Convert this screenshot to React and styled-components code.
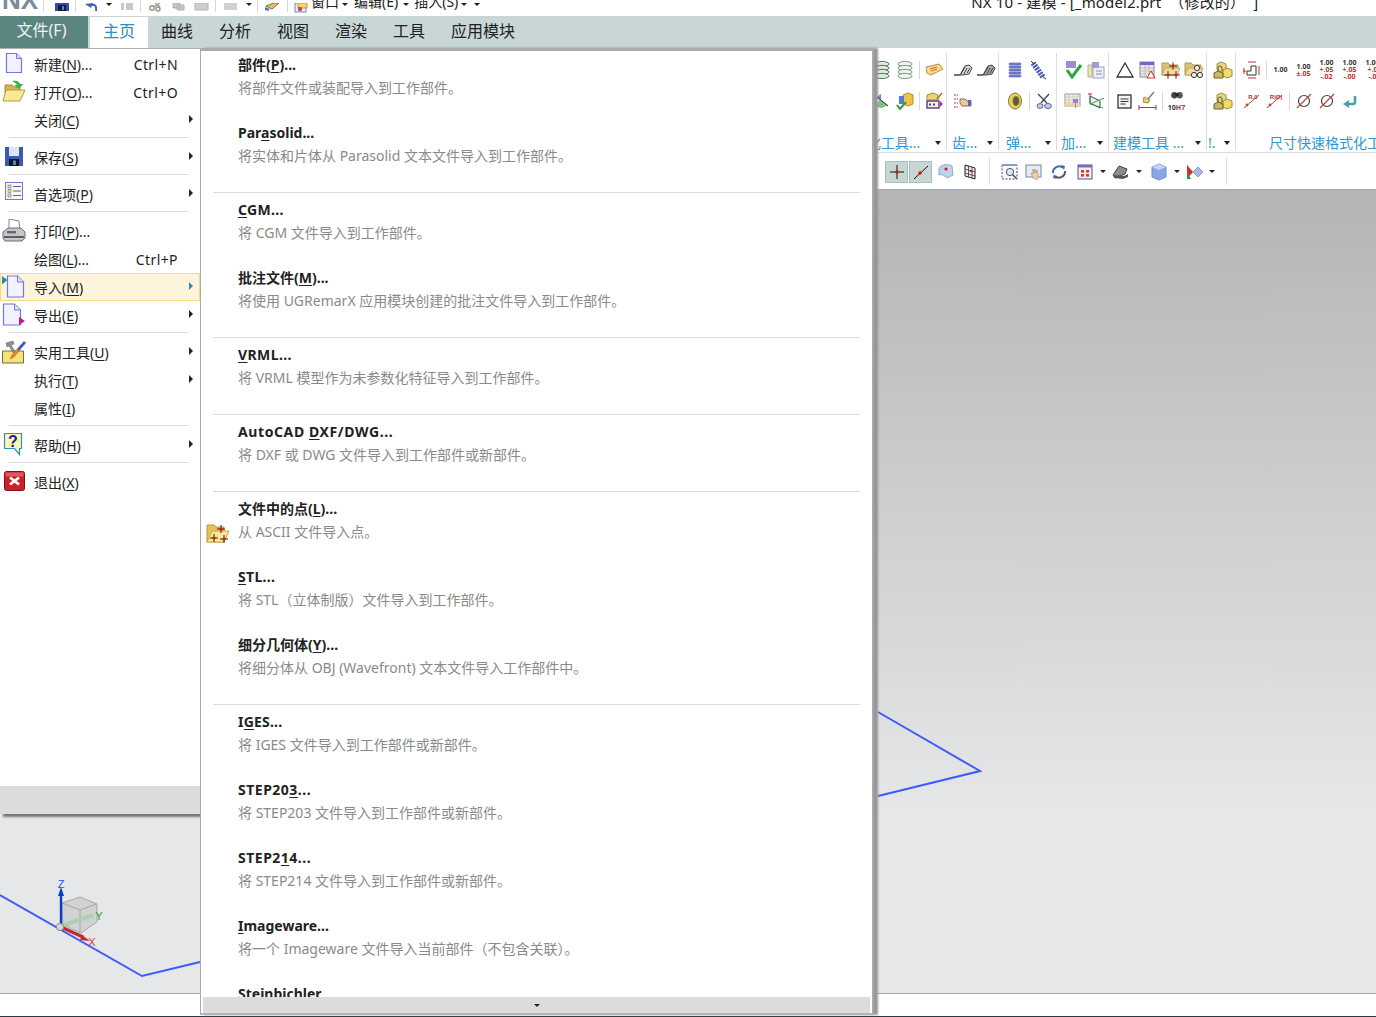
import styled, { createGlobalStyle } from "styled-components";

const GlobalStyle = createGlobalStyle`
  html, body {
    margin: 0;
    padding: 0;
    background: #fff;
  }
  body {
    font-family: "Noto Sans", "Noto Sans CJK SC", sans-serif;
    font-size: 14px;
    color: #222;
  }
  u {
    text-underline-offset: 2px;
  }
`;

const Page = styled.div`
  position: relative;
  width: 1376px;
  height: 1017px;
  overflow: hidden;
  display: flex;
  flex-direction: column;
`;

const TitleBar = styled.div`
  height: 8px;
  padding-bottom: 8px;
  display: flex;
  align-items: flex-end;
  background: #fff;
  overflow: hidden;
  flex: none;
`;

const Logo = styled.span`
  width: 36px;
  padding-left: 2px;
  box-sizing: border-box;
  font: bold 26px/20px "Liberation Sans", sans-serif;
  color: #7d8b9b;
  margin-bottom: -2px;
  flex: none;
`;

const TitleSep = styled.span`
  width: 1px;
  height: 13px;
  margin-left: ${(p) => p.$ml}px;
  margin-bottom: -4px;
  background: #d8d8d8;
  flex: none;
`;

const TitleIcon = styled.span`
  width: 16px;
  height: 10px;
  margin-left: ${(p) => p.$ml}px;
  flex: none;
`;

const TitleText = styled.span`
  margin-left: ${(p) => p.$ml}px;
  margin-bottom: -4px;
  font-size: ${(p) => p.$size || 14}px;
  letter-spacing: ${(p) => p.$track || 0}px;
  line-height: 20px;
  white-space: pre;
  flex: none;
`;

const Caret = styled.span`
  width: 0;
  height: 0;
  margin-left: ${(p) => p.$ml || 0}px;
  border-left: 3px solid transparent;
  border-right: 3px solid transparent;
  border-top: 3px solid #222;
  flex: none;
`;

const TitleCaret = styled(Caret)`
  margin-bottom: 2px;
`;

const TabBar = styled.div`
  height: 32px;
  display: flex;
  background: #c8d6d5;
  flex: none;
`;

const FileTab = styled.div`
  width: 88px;
  margin-right: 2px;
  background: #5b857f;
  color: #eef3f2;
  font-size: 16px;
  line-height: 29px;
  text-align: center;
  padding-right: 5px;
  box-sizing: border-box;
`;

const Tab = styled.div`
  padding: 0 13px;
  margin-top: ${(p) => (p.$active ? 1 : 0)}px;
  font-size: 16px;
  line-height: ${(p) => (p.$active ? 29 : 31)}px;
  background: ${(p) => (p.$active ? "#fff" : "transparent")};
  color: ${(p) => (p.$active ? "#2b8dc4" : "#222")};
`;

const Ribbon = styled.div`
  height: 105px;
  padding-left: 866px;
  display: flex;
  background: #fff;
  border-bottom: 1px solid #dedede;
  box-sizing: border-box;
  flex: none;
  overflow: hidden;
`;

const Group = styled.div`
  height: 96px;
  margin-top: 5px;
  padding: 1px 1px 0 4px;
  border-right: 1px solid #dcdcdc;
  flex: none;
`;

const LastGroup = styled(Group)`
  border-right: 0;
  padding-right: 0;
`;

const IconRow = styled.div`
  height: 31px;
  display: flex;
  align-items: center;
`;

const Cell = styled.div`
  width: 23px;
  height: 24px;
  display: flex;
  align-items: center;
  justify-content: center;
  flex: none;
`;

const RowDivider = styled.span`
  width: 1px;
  height: 18px;
  margin: 0 2.5px;
  background: #d8d8d8;
  flex: none;
`;

const GroupLabel = styled.div`
  height: 20px;
  margin-top: 17px;
  margin-left: ${(p) => p.$left}px;
  margin-right: 4px;
  display: flex;
  align-items: center;
  font-size: 14px;
  line-height: 20px;
  color: #2f97d3;
  white-space: nowrap;
`;

const LabelCaret = styled(Caret)`
  margin-left: auto;
  border-left-width: 3.5px;
  border-right-width: 3.5px;
  border-top-width: 4px;
`;

const Tol = styled.div`
  display: flex;
  flex-direction: column;
  align-items: center;
  font: 7px/7px "Noto Sans", sans-serif;
  color: #333;
  white-space: nowrap;
`;

const TolLine = styled.span`
  color: ${(p) => p.$color || "#333"};
  font-weight: ${(p) => (p.$bold ? 700 : 400)};
`;

const Toolbar = styled.div`
  height: 36px;
  padding: 1px 0 0 885px;
  display: flex;
  align-items: center;
  background: #fff;
  box-sizing: border-box;
  flex: none;
`;

const PressedButton = styled.div`
  width: 23px;
  height: 22px;
  margin-right: 1px;
  display: flex;
  align-items: center;
  justify-content: center;
  background: #c7d7d4;
  border: 1px solid #a9bdb9;
  box-sizing: border-box;
  flex: none;
`;

const ToolCell = styled.div`
  width: 24px;
  display: flex;
  justify-content: center;
  margin-left: ${(p) => p.$ml || 0}px;
  flex: none;
`;

const ToolSep = styled.span`
  width: 1px;
  height: 27px;
  margin-left: ${(p) => p.$ml}px;
  background: #dcdcdc;
  flex: none;
`;

const Viewport = styled.div`
  position: relative;
  flex: 1;
  border-top: 1px solid #a6a7a8;
  border-bottom: 1px solid #a9a9a9;
  background: linear-gradient(#b3b4b6 0%, #e6e7e9 78%);
`;

const Canvas = styled.svg`
  position: absolute;
  left: 0;
  top: 0;
`;

const StatusBar = styled.div`
  height: 22px;
  background: #fff;
  border-bottom: 1px solid #2b3a42;
  flex: none;
`;

const FileMenu = styled.div`
  position: absolute;
  left: 0;
  top: 48px;
  width: 200px;
  height: 766px;
  display: flex;
  flex-direction: column;
  padding-top: 1px;
  box-sizing: border-box;
  background: #fff;
  border-top: 1px solid #b0b0b0;
  box-shadow: 3px 3px 2px #777;
`;

const MenuRow = styled.div`
  height: 28px;
  display: flex;
  align-items: center;
  box-sizing: border-box;
  flex: none;
  background: ${(p) => (p.$active ? "#fdf4dc" : "transparent")};
  box-shadow: ${(p) => (p.$active ? "inset 0 0 0 1px #fad987" : "none")};
`;

const MenuIcon = styled.span`
  width: 34px;
  padding-left: 2px;
  box-sizing: border-box;
  display: flex;
  align-items: center;
  flex: none;
`;

const MenuLabel = styled.span`
  white-space: nowrap;
`;

const Shortcut = styled.span`
  margin-left: auto;
  margin-right: 22px;
  letter-spacing: 0.4px;
`;

const Arrow = styled.span`
  width: 0;
  height: 0;
  margin-left: auto;
  margin-right: 7px;
  margin-bottom: 2px;
  border-top: 4px solid transparent;
  border-bottom: 4px solid transparent;
  border-left: 4px solid ${(p) => (p.$active ? "#2b8dc4" : "#222")};
`;

const MenuSep = styled.div`
  height: 1px;
  margin: 3px 11px 5px 9px;
  background: #dcdcdc;
  flex: none;
`;

const MenuFoot = styled.div`
  margin-top: auto;
  height: 28px;
  background: #dcdcdc;
  flex: none;
`;

const SubMenu = styled.div`
  position: absolute;
  left: 200px;
  top: 48px;
  width: 674px;
  height: 967px;
  display: flex;
  flex-direction: column;
  box-sizing: border-box;
  background: #fff;
  border-top: 3px solid #ababab;
  border-left: 1px solid #ababab;
  border-right: 2px solid #a8a8a8;
  border-bottom: 2px solid #b4b4b4;
  box-shadow: 4px 0 2px #969696;
`;

const SubList = styled.div`
  flex: 1;
  overflow: hidden;
`;

const SubItem = styled.div`
  height: 68px;
  display: flex;
`;

const SubIcon = styled.div`
  width: 37px;
  padding: 25px 0 0 5px;
  box-sizing: border-box;
  flex: none;
`;

const SubText = styled.div`
  padding-top: 3px;
`;

const SubTitle = styled.div`
  font-weight: 700;
  font-size: 14px;
  line-height: 22px;
  letter-spacing: ${(p) => p.$track || 0}px;
  color: #222;
`;

const SubDesc = styled.div`
  margin-top: 1px;
  font-size: 14px;
  line-height: 22px;
  color: #8a8a8a;
`;

const SubSep = styled.div`
  height: 1px;
  margin: 5px 12px 3px 12px;
  background: #dcdcdc;
`;

const ScrollFoot = styled.div`
  height: 16px;
  margin: 0 2px;
  display: flex;
  align-items: center;
  justify-content: center;
  background: #dcdcdc;
  flex: none;
`;

const Ico = ({ size = 20, box = 20, children }) => (
  <svg width={size} height={size} viewBox={`0 0 ${box} ${box}`}>
    {children}
  </svg>
);

const TIco = ({ children }) => (
  <svg width="16" height="10" viewBox="0 0 16 10">
    {children}
  </svg>
);

const NewDoc = () => (
  <Ico size={24} box={24}>
    <path d="M4.5 1.5h10l5 5v14h-15z" fill="#f2f3ff" stroke="#7379dc" strokeWidth="1.2" />
    <path d="M14.5 1.5v5h5" fill="#dfe2fb" stroke="#7379dc" />
  </Ico>
);

const ImportDoc = () => (
  <Ico size={24} box={24}>
    <path d="M5.5 1h10l6 6v15h-16z" fill="#f2f3ff" stroke="#7379dc" strokeWidth="1.2" />
    <path d="M15.5 1v6h6" fill="#dfe2fb" stroke="#7379dc" />
    <path d="M0 1l5.5 4L0 9.5z" fill="#1f93a8" />
  </Ico>
);

const ExportDoc = () => (
  <Ico size={24} box={24}>
    <path d="M1.5 1h11l6 6v15h-17z" fill="#f2f3ff" stroke="#7379dc" strokeWidth="1.2" />
    <path d="M12.5 1v6h6" fill="#dfe2fb" stroke="#7379dc" />
    <path d="M17 14l6 4-6 4z" fill="#c0189c" />
  </Ico>
);

const FolderOpen = () => (
  <Ico size={24} box={24}>
    <path d="M3 5h7l2 2h6v6H3z" fill="#d8b34a" stroke="#a98d3a" />
    <path d="M1 21l3-11h19l-5 11z" fill="#fbe98f" stroke="#b69a42" />
    <path d="M10 1c4-1 7 0 8 3h3l-4 5-5-4h3c-1-2-3-3-5-4z" fill="#3fb14a" />
  </Ico>
);

const Floppy = () => (
  <Ico size={24} box={24}>
    <rect x="3" y="2" width="18" height="19" fill="#3a5bb4" />
    <rect x="7" y="2" width="10" height="9" fill="#dfe3f2" />
    <rect x="7" y="14" width="10" height="7" fill="#15151f" />
    <rect x="11" y="15.5" width="3" height="4.5" fill="#5d7fd0" />
  </Ico>
);

const Prefs = () => (
  <Ico size={24} box={24}>
    <rect x="3.5" y="0.5" width="17" height="17" fill="#f6f6ff" stroke="#7379dc" />
    {[3, 7.5, 12].map((y) => (
      <g key={y}>
        <rect x="6" y={y} width="3" height="3" fill="#f5e25a" stroke="#6a6ac0" strokeWidth=".6" />
        <path d={`M11 ${y + 1.5}h8`} stroke="#666" />
      </g>
    ))}
  </Ico>
);

const Printer = () => (
  <Ico size={24} box={24}>
    <path d="M7 0l10 2 1 9H7z" fill="#fff" stroke="#8a8a8a" />
    <path d="M1 13l5-4h13l4 4v6l-3 3H3l-2-3z" fill="#c3c6ca" stroke="#6d6f72" />
    <path d="M2 18h20" stroke="#5c5e60" strokeWidth="2" />
    <rect x="5" y="12" width="9" height="2.4" fill="#65676a" />
  </Ico>
);

const Toolbox = () => (
  <Ico size={24} box={24}>
    <path d="M0.5 11h21v12h-21z" fill="#f6e27a" stroke="#7a6c3a" />
    <path d="M4 3l7-2 1 3-3 1 5 8-2 1-5-8-2 1z" fill="#8c8f94" stroke="#666" strokeWidth=".5" />
    <path d="M22 1l2 2-7 8-2-2z" fill="#3d57c8" />
    <path d="M15 9l2 2-5 6-4 2 2-4z" fill="#e8862a" stroke="#a85c18" strokeWidth=".5" />
  </Ico>
);

const Help = () => (
  <Ico size={24} box={24}>
    <path d="M2.5 .5h17v15h-2v6l-5-6h-10z" fill="#fbf6b4" stroke="#2f8fbf" strokeWidth="1.2" />
    <text x="11" y="13.5" fontSize="16" fontWeight="700" fontFamily="Liberation Sans" textAnchor="middle" fill="#1c1ca0">?</text>
  </Ico>
);

const Exit = () => (
  <Ico size={24} box={24}>
    <rect x="2.5" y="1.5" width="20" height="19" rx="2" fill="#c8232a" stroke="#7a1418" />
    <path d="M3.5 2.5h18v4h-18z" fill="#dc5a5e" />
    <path d="M8 7.5l9 7M17 7.5l-9 7" stroke="#fff" strokeWidth="2.8" />
  </Ico>
);

const PointsFolder = () => (
  <Ico size={24} box={24}>
    <path d="M1 5h7l2 2h8v15H1z" fill="#e6c25a" stroke="#b6983e" />
    <path d="M1 22l5-11h17l-5 11z" fill="#fbe794" stroke="#c6a94c" />
    {[[15, 9], [8, 18], [18, 19]].map(([x, y]) => (
      <g key={x}>
        <path d={`M${x - 4} ${y}h8M${x} ${y - 4}v8`} stroke="#111" strokeWidth=".9" />
        <circle cx={x} cy={y} r="1.6" fill="#e81010" />
      </g>
    ))}
  </Ico>
);

const Stack = ({ line, fill }) => (
  <Ico>
    {[4, 8, 12, 16].map((y) => (
      <ellipse key={y} cx="10" cy={y} rx="7" ry="2.6" fill={fill} stroke={line} />
    ))}
  </Ico>
);

const Tag = () => (
  <Ico>
    <path d="M2 7l13-3 4 5-12 6-4-2z" fill="#f5d98a" stroke="#c98a3c" />
    <path d="M6 9l7-2M7 11l6-2" stroke="#c46a4a" />
  </Ico>
);

const Gear1 = ({ fill }) => (
  <Ico>
    <path d="M1 15h6l5-9 4-1 3 3-3 6-6 1z" fill={fill} stroke="#444" />
    <path d="M8 14l4-7M11 14l3-6M14 13l3-5" stroke="#444" />
  </Ico>
);

const Coil = () => (
  <Ico>
    {[4, 7, 10, 13, 16].map((y) => (
      <rect key={y} x="4" y={y - 1} width="12" height="2" rx="1" fill="#7d86cf" stroke="#4650a8" strokeWidth=".6" />
    ))}
  </Ico>
);

const Spring = () => (
  <Ico>
    <path d="M5 3l10 14" stroke="#4b57b8" strokeWidth="5.5" strokeDasharray="2 1" />
    <path d="M3 1l3 3M15 17l3 2" stroke="#333" />
  </Ico>
);

const CheckPurple = () => (
  <Ico>
    <path d="M3 1h10v7H3z" fill="#9a8fd0" />
    <path d="M4 10l5 7 9-12" fill="none" stroke="#27a83a" strokeWidth="3" />
  </Ico>
);

const DocPurple = () => (
  <Ico>
    <rect x="7" y="7" width="11" height="11" fill="#eef0f6" stroke="#9aa2c8" />
    <path d="M2 5h4v12H2z" fill="#f1e7a0" stroke="#aaa" />
    <path d="M6 2h7v6H6z" fill="#a39ad6" />
    <path d="M10 11h6M10 14h6" stroke="#8a90b0" />
  </Ico>
);

const Triangle = () => (
  <Ico>
    <path d="M10 3l8 14H2z" fill="none" stroke="#333" strokeWidth="1.3" />
  </Ico>
);

const TableIcon = () => (
  <Ico>
    <rect x="2" y="2" width="14" height="15" fill="#e8e8e8" stroke="#888" />
    <rect x="2" y="2" width="14" height="3" fill="#8460c8" />
    <path d="M2 8h14M2 11h14M2 14h14M7 5v12M11 5v12" stroke="#aaa" strokeWidth=".6" />
    <path d="M13 11l4 7H9z" fill="#fff" stroke="#d62828" />
  </Ico>
);

const FolderMark = ({ circles }) => (
  <Ico>
    <path d="M1 3h6l2 2h8v10H1z" fill="#dcc27a" stroke="#b39a52" />
    <path d="M1 15l3-7h15l-3 7z" fill="#efdc9a" stroke="#c2a95e" />
    {circles
      ? [[13, 8], [10, 15], [16, 15]].map(([x, y]) => (
          <circle key={x} cx={x} cy={y} r="2.6" fill="#f3f3f3" stroke="#333" />
        ))
      : [[12, 6], [7, 15], [15, 15]].map(([x, y]) => (
          <g key={x}>
            <path d={`M${x - 4} ${y}h8M${x} ${y - 4}v8`} stroke="#222" strokeWidth=".8" />
            <circle cx={x} cy={y} r="1.5" fill="#e01818" />
          </g>
        ))}
  </Ico>
);

const Cubes = () => (
  <Ico>
    <path d="M8 2l5 2v6l-5 2-4-2V4z" fill="#e9d77a" stroke="#a08c3a" />
    <path d="M14 8l5 2v6l-5 2-4-2v-6z" fill="#f0dc68" stroke="#a08c3a" />
    <path d="M5 11l5 2v5H1v-5z" fill="#c9b860" stroke="#6e6330" />
    <path d="M5 11V8a2 2 0 0 1 4 0v3" fill="none" stroke="#555" />
  </Ico>
);

const DimStep = () => (
  <Ico>
    <path d="M9 6h5v9H5v-4h4z" fill="none" stroke="#333" />
    <path d="M2 8v6M1 11h3M17 6v9M6 2h8M6 18h8" stroke="#c62c2c" />
  </Ico>
);

const RedDim = ({ text }) => (
  <Ico>
    <path d="M2 17L17 4" stroke="#d03c3c" />
    <circle cx="5" cy="14" r="1.4" fill="#d03c3c" />
    <text x="11" y="8" fontSize="6" fontWeight="700" fontFamily="Liberation Sans" textAnchor="middle" fill="#b33">{text}</text>
  </Ico>
);

const Diameter = ({ color }) => (
  <Ico>
    <circle cx="10" cy="10" r="5.5" fill="none" stroke="#444" strokeWidth="1.2" />
    <path d="M3 17L17 3" stroke={color} strokeWidth="1.3" />
  </Ico>
);

const ArrowCube = () => (
  <Ico>
    <path d="M9 3l-6 4 6 2z" fill="#9178d0" />
    <path d="M3 16l5-8 8 6-6 3z" fill="#7bc47f" />
    <path d="M5 6l11 9" stroke="#333" />
  </Ico>
);

const CubeCheck = () => (
  <Ico>
    <path d="M8 4l5-2 5 2v9l-5 2-5-2z" fill="#f2c14a" stroke="#b88a2a" />
    <path d="M4 5h5v8H4z" fill="#4d7fd6" />
    <path d="M2 14l3 4 6-7" fill="none" stroke="#2c9b3a" strokeWidth="2" />
  </Ico>
);

const Machine = () => (
  <Ico>
    <path d="M3 4l6-2 5 2v5H3z" fill="#f0d078" stroke="#a88c3a" />
    <rect x="3" y="10" width="12" height="7" fill="#f5f1d8" stroke="#4a3a90" strokeWidth="1.4" />
    <path d="M5 13.5h2M9 13.5h2" stroke="#4a3a90" strokeWidth="2" />
    <path d="M16 10l3 3-3 3z" fill="#b02aa8" />
    <path d="M13 8l5-6" stroke="#8a7a3a" strokeWidth="1.4" />
  </Ico>
);

const HandList = () => (
  <Ico>
    <path d="M1 4h4M1 8h4M1 12h4M1 16h4" stroke="#c62c2c" strokeDasharray="2 1" />
    <path d="M7 8h5l2 2h4v5H9l-2-3z" fill="#ecc9a0" stroke="#8a7050" />
    <rect x="15" y="9" width="3" height="6" fill="#5a62c0" />
  </Ico>
);

const Ring = () => (
  <Ico>
    <ellipse cx="10" cy="10" rx="6.5" ry="8" fill="#e8d060" stroke="#8a7a30" />
    <ellipse cx="11" cy="10" rx="3" ry="4.5" fill="#5a5a4a" stroke="#8a7a30" />
  </Ico>
);

const Clip = () => (
  <Ico>
    <path d="M4 3l9 9M15 3L7 12" stroke="#444" strokeWidth="1.3" />
    <ellipse cx="6" cy="15" rx="3" ry="2.4" fill="#c4cbe8" stroke="#5a66a8" />
    <ellipse cx="14" cy="15" rx="3.4" ry="2.6" fill="#c4cbe8" stroke="#5a66a8" />
  </Ico>
);

const GridPin = () => (
  <Ico>
    <rect x="2" y="3" width="15" height="12" fill="#f1f1ea" stroke="#999" />
    <path d="M2 6h15M2 9h15M2 12h15M6 3v12M10 3v12M14 3v12" stroke="#b5b5b0" strokeWidth=".6" />
    <rect x="2" y="13" width="15" height="2" fill="#f0d878" />
    <path d="M10 8h5v4h-2v5h-1v-5h-2z" fill="#a27cd0" />
  </Ico>
);

const AxesBox = () => (
  <Ico>
    <path d="M4 5l10 5v7L4 12z" fill="#eee" stroke="#444" />
    <path d="M4 2v11M4 13l13 4M4 13l14-6" stroke="#2c9a3a" strokeWidth=".9" />
    <path d="M2 3h4" stroke="#d03030" />
  </Ico>
);

const NoteDoc = () => (
  <Ico>
    <rect x="3" y="4" width="13" height="13" fill="#f4f4f4" stroke="#222" strokeWidth="1.2" />
    <path d="M5.5 8h8M5.5 10.5h8M5.5 13h5" stroke="#333" />
  </Ico>
);

const Broom = () => (
  <Ico>
    <path d="M16 1l-6 7" stroke="#6a88c0" strokeWidth="1.6" />
    <path d="M6 6l6 3-2 3-5-1z" fill="#e9cc78" stroke="#a88c3a" />
    <path d="M1 14v5M18 14v5M1 16.5h17" stroke="#c62c2c" />
  </Ico>
);

const Binoculars = () => (
  <Tol>
    <Ico size={14} box={16}>
      <circle cx="5" cy="6" r="3.6" fill="#444" />
      <circle cx="11" cy="6" r="3.6" fill="#556" />
      <path d="M6 4h4v3H6z" fill="#222" />
    </Ico>
    <TolLine $bold>
      10<TolLine $color="#c03030" $bold>H7</TolLine>
    </TolLine>
  </Tol>
);

const Return = () => (
  <Ico>
    <path d="M15 5v6a2 2 0 0 1-2 2H8" fill="none" stroke="#48a3a8" strokeWidth="2.6" />
    <path d="M9 9v8l-6-4z" fill="#48a3a8" />
  </Ico>
);

const ToleranceCell = ({ top, bottom, color = "#c03030" }) => (
  <Tol>
    <TolLine $bold>1.00</TolLine>
    <TolLine $color={color} $bold>{top}</TolLine>
    {bottom && <TolLine $color={color} $bold>{bottom}</TolLine>}
  </Tol>
);

const CrossDot = () => (
  <Ico size={16} box={16}>
    <path d="M1 8h14M8 1v14" stroke="#111" />
    <circle cx="8" cy="8" r="1.8" fill="#d01818" />
  </Ico>
);

const LineDot = () => (
  <Ico size={18} box={18}>
    <path d="M2 16L16 3" stroke="#111" />
    <circle cx="8" cy="10" r="1.8" fill="#d01818" />
  </Ico>
);

const ToolIcons = {
  surface: (
    <>
      <path d="M3 6c3-4 9-4 13-2l1 9-6 3c-3-3-6-4-8-3z" fill="#bcd4ee" stroke="#8ca8c8" />
      <circle cx="10" cy="7" r="1.6" fill="#d01818" />
    </>
  ),
  grid: (
    <>
      <path d="M5 3l10 3v11L5 14z" fill="#eee" stroke="#222" />
      <path d="M5 7l10 3M5 11l10 3M8.5 4v11M12 5v11" stroke="#222" strokeWidth=".7" />
      <circle cx="11" cy="9" r="1.3" fill="#d01818" />
    </>
  ),
  zoom: (
    <>
      <rect x="2" y="3" width="15" height="14" fill="#f4f7fb" stroke="#3b46a8" strokeDasharray="2 1.5" />
      <rect x="2" y="2" width="15" height="2" fill="#8f98c8" />
      <circle cx="10" cy="10" r="3.6" fill="#dfe9f6" stroke="#555" />
      <path d="M12.5 12.5l4 4" stroke="#555" strokeWidth="1.6" />
    </>
  ),
  pan: (
    <>
      <rect x="2" y="3" width="15" height="12" fill="#e6eaf2" stroke="#7b85a8" />
      <path d="M9 16l-2-5 2 1V7l1 4 1-4 1 4 1-3 1 4v4l-1 2z" fill="#efcfa8" stroke="#a58860" strokeWidth=".6" />
    </>
  ),
  rotate: (
    <>
      <path d="M4 11a6 6 0 0 1 10-5" fill="none" stroke="#3d6bb8" strokeWidth="2" />
      <path d="M16 9a6 6 0 0 1-10 5" fill="none" stroke="#5a5a6a" strokeWidth="2" />
      <path d="M12 3l4 1-1 4zM8 17l-4-1 1-4z" fill="#3d6bb8" />
    </>
  ),
  layout: (
    <>
      <rect x="3" y="3" width="14" height="14" fill="#f6eef0" stroke="#4a52a8" />
      <rect x="3" y="3" width="14" height="2.5" fill="#6a72c0" />
      {[[6, 8], [11, 8], [6, 12], [11, 12]].map(([x, y]) => (
        <rect key={`${x}${y}`} x={x} y={y} width="3" height="2.6" fill="#d83a3a" />
      ))}
    </>
  ),
  shade: (
    <>
      <path d="M8 4l8 3-2 5-10 4-2-3z" fill="#8a8c90" stroke="#444" />
      <path d="M3 13l10 1 4-2v3l-5 2-9-1z" fill="#555" />
    </>
  ),
  cube: (
    <>
      <path d="M3 5l7-3 7 3v10l-7 3-7-3z" fill="#88a8e4" stroke="#6a8ac8" />
      <path d="M3 5l7 3 7-3-7-3z" fill="#c4d4f4" />
    </>
  ),
  view: (
    <>
      <path d="M3 3l6 7-6 7z" fill="#d03030" />
      <path d="M3 10l4 7H3z" fill="#2c9a3a" />
      <path d="M9 10l5-5 5 5-5 5z" fill="#a8b8e8" stroke="#8a9ac8" />
    </>
  ),
};

const TitleIcons = {
  save: (
    <>
      <rect x="1" y="0" width="14" height="8" fill="#2d4fa8" />
      <rect x="4" y="2" width="8" height="6" fill="#1a1a2a" />
      <rect x="8" y="3" width="2" height="4" fill="#5d7fd0" />
    </>
  ),
  undo: (
    <>
      <path d="M7 2c4-1 6 1 5 6" fill="none" stroke="#3b62c0" strokeWidth="2" />
      <path d="M9 0L1 1l6 4z" fill="#3b62c0" />
    </>
  ),
  redo: <path d="M2 0h3v7H2zM7 0h7v7H7z" fill="#c8c8d0" />,
  cut: (
    <>
      <path d="M7 0l5 4M12 0L6 4" stroke="#999" strokeWidth="1.4" />
      <circle cx="4" cy="5" r="2.2" fill="none" stroke="#a09080" strokeWidth="1.4" />
      <circle cx="10" cy="6" r="2" fill="none" stroke="#a09080" strokeWidth="1.4" />
    </>
  ),
  copy: <path d="M2 0h7v5H2zM6 2h7v5H6z" fill="#c8c8c8" stroke="#b0b0b0" />,
  paste: <path d="M1 0h13v7H1z" fill="#cfcfcf" stroke="#b4b4b4" />,
  box: <rect x="1" y="0" width="13" height="7" fill="#d2d2d2" />,
  brush: (
    <>
      <path d="M2 3l8-3h5l-7 6z" fill="#e8c270" stroke="#8a6a2a" />
      <path d="M1 4l5 2-2 2-3-1z" fill="#5a78c0" />
    </>
  ),
  window: (
    <>
      <rect x="1" y="0" width="11" height="9" fill="#e6effa" stroke="#6a8ac8" />
      <path d="M4 0h9v5H4z" fill="#f6d860" stroke="#c8a030" />
      <circle cx="6" cy="6" r="2.2" fill="#d84040" />
    </>
  ),
};

const SUB_ITEMS = [
  { title: <>部件(<u>P</u>)...</>, desc: "将部件文件或装配导入到工作部件。" },
  { title: <>Par<u>a</u>solid...</>, desc: "将实体和片体从 Parasolid 文本文件导入到工作部件。" },
  "sep",
  { title: <><u>C</u>GM...</>, desc: "将 CGM 文件导入到工作部件。", track: 0.3 },
  { title: <>批注文件(<u>M</u>)...</>, desc: "将使用 UGRemarX 应用模块创建的批注文件导入到工作部件。" },
  "sep",
  { title: <><u>V</u>RML...</>, desc: "将 VRML 模型作为未参数化特征导入到工作部件。", track: 0.4 },
  "sep",
  { title: <>AutoCAD <u>D</u>XF/DWG...</>, desc: "将 DXF 或 DWG 文件导入到工作部件或新部件。", track: 0.6 },
  "sep",
  { title: <>文件中的点(<u>L</u>)...</>, desc: "从 ASCII 文件导入点。", icon: <PointsFolder /> },
  { title: <><u>S</u>TL...</>, desc: "将 STL（立体制版）文件导入到工作部件。", track: 0.3 },
  { title: <>细分几何体(<u>Y</u>)...</>, desc: "将细分体从 OBJ (Wavefront) 文本文件导入工作部件中。" },
  "sep",
  { title: <>I<u>G</u>ES...</>, desc: "将 IGES 文件导入到工作部件或新部件。", track: 0.2 },
  { title: <>STEP20<u>3</u>...</>, desc: "将 STEP203 文件导入到工作部件或新部件。", track: 0.5 },
  { title: <>STEP2<u>1</u>4...</>, desc: "将 STEP214 文件导入到工作部件或新部件。", track: 0.5 },
  { title: <><u>I</u>mageware...</>, desc: "将一个 Imageware 文件导入当前部件（不包含关联）。" },
  { title: "Steinbichler", desc: "" },
];

const Row = ({ icon, label, shortcut, arrow, active }) => (
  <MenuRow $active={active}>
    <MenuIcon>{icon}</MenuIcon>
    <MenuLabel>{label}</MenuLabel>
    {shortcut && <Shortcut>{shortcut}</Shortcut>}
    {arrow && <Arrow $active={active} />}
  </MenuRow>
);

export default function App() {
  return (
    <Page>
      <GlobalStyle />
      <TitleBar>
        <Logo>NX</Logo>
        <TitleSep $ml={7} />
        <TitleIcon $ml={10}><TIco>{TitleIcons.save}</TIco></TitleIcon>
        <TitleSep $ml={5} />
        <TitleIcon $ml={8}><TIco>{TitleIcons.undo}</TIco></TitleIcon>
        <TitleCaret $ml={6} />
        <TitleIcon $ml={7}><TIco>{TitleIcons.redo}</TIco></TitleIcon>
        <TitleSep $ml={5} />
        <TitleIcon $ml={7}><TIco>{TitleIcons.cut}</TIco></TitleIcon>
        <TitleIcon $ml={7}><TIco>{TitleIcons.copy}</TIco></TitleIcon>
        <TitleIcon $ml={7}><TIco>{TitleIcons.paste}</TIco></TitleIcon>
        <TitleSep $ml={5} />
        <TitleIcon $ml={7}><TIco>{TitleIcons.box}</TIco></TitleIcon>
        <TitleCaret $ml={7} />
        <TitleSep $ml={5} />
        <TitleIcon $ml={6}><TIco>{TitleIcons.brush}</TIco></TitleIcon>
        <TitleSep $ml={7} />
        <TitleIcon $ml={6}><TIco>{TitleIcons.window}</TIco></TitleIcon>
        <TitleText $ml={1}>窗口</TitleText>
        <TitleCaret $ml={3} />
        <TitleText $ml={6}>编辑(E)</TitleText>
        <TitleCaret $ml={5} />
        <TitleText $ml={5}>插入(S)</TitleText>
        <TitleCaret $ml={3} />
        <TitleCaret $ml={7} />
        <TitleText $ml={491} $size={15} $track={0.15}>{"NX 10 - 建模 - [_model2.prt  （修改的）  ]"}</TitleText>
      </TitleBar>

      <TabBar>
        <FileTab>文件(F)</FileTab>
        <Tab $active>主页</Tab>
        <Tab>曲线</Tab>
        <Tab>分析</Tab>
        <Tab>视图</Tab>
        <Tab>渲染</Tab>
        <Tab>工具</Tab>
        <Tab>应用模块</Tab>
      </TabBar>

      <Ribbon>
        <Group>
          <IconRow>
            <Cell><Stack line="#4c7a5c" fill="#dfe8df" /></Cell>
            <Cell><Stack line="#7f9a86" fill="#eef2ee" /></Cell>
            <RowDivider />
            <Cell><Tag /></Cell>
          </IconRow>
          <IconRow>
            <Cell><ArrowCube /></Cell>
            <Cell><CubeCheck /></Cell>
            <RowDivider />
            <Cell><Machine /></Cell>
          </IconRow>
          <GroupLabel $left={-3}>化工具...<LabelCaret /></GroupLabel>
        </Group>
        <Group>
          <IconRow>
            <Cell><Gear1 fill="#d8d8d8" /></Cell>
            <Cell><Gear1 fill="#a9a9a9" /></Cell>
          </IconRow>
          <IconRow>
            <Cell><HandList /></Cell>
          </IconRow>
          <GroupLabel $left={1}>齿...<LabelCaret /></GroupLabel>
        </Group>
        <Group>
          <IconRow>
            <Cell><Coil /></Cell>
            <Cell><Spring /></Cell>
          </IconRow>
          <IconRow>
            <Cell><Ring /></Cell>
            <RowDivider />
            <Cell><Clip /></Cell>
          </IconRow>
          <GroupLabel $left={3}>弹...<LabelCaret /></GroupLabel>
        </Group>
        <Group>
          <IconRow>
            <Cell><CheckPurple /></Cell>
            <Cell><DocPurple /></Cell>
          </IconRow>
          <IconRow>
            <Cell><GridPin /></Cell>
            <Cell><AxesBox /></Cell>
          </IconRow>
          <GroupLabel $left={0}>加...<LabelCaret /></GroupLabel>
        </Group>
        <Group>
          <IconRow>
            <Cell><Triangle /></Cell>
            <Cell><TableIcon /></Cell>
            <Cell><FolderMark /></Cell>
            <Cell><FolderMark circles /></Cell>
          </IconRow>
          <IconRow>
            <Cell><NoteDoc /></Cell>
            <Cell><Broom /></Cell>
            <RowDivider />
            <Cell><Binoculars /></Cell>
          </IconRow>
          <GroupLabel $left={0}>建模工具 ...<LabelCaret /></GroupLabel>
        </Group>
        <Group>
          <IconRow>
            <Cell><Cubes /></Cell>
          </IconRow>
          <IconRow>
            <Cell><Cubes /></Cell>
          </IconRow>
          <GroupLabel $left={-3}>!.<LabelCaret /></GroupLabel>
        </Group>
        <LastGroup>
          <IconRow>
            <Cell><DimStep /></Cell>
            <RowDivider />
            <Cell><Tol><TolLine $bold>1.00</TolLine></Tol></Cell>
            <Cell><ToleranceCell top="±.05" /></Cell>
            <Cell><ToleranceCell top="+.05" bottom="-.02" /></Cell>
            <Cell><ToleranceCell top="+.05" bottom="-.00" /></Cell>
            <Cell><ToleranceCell top="+.0" bottom="-.0" /></Cell>
          </IconRow>
          <IconRow>
            <Cell><RedDim text="R.0" /></Cell>
            <Cell><RedDim text="R|Ø|" /></Cell>
            <RowDivider />
            <Cell><Diameter color="#d03c3c" /></Cell>
            <Cell><Diameter color="#d03c3c" /></Cell>
            <Cell><Return /></Cell>
          </IconRow>
          <GroupLabel $left={29}>尺寸快速格式化工具</GroupLabel>
        </LastGroup>
      </Ribbon>

      <Toolbar>
        <PressedButton><CrossDot /></PressedButton>
        <PressedButton><LineDot /></PressedButton>
        <ToolCell $ml={1}><Ico>{ToolIcons.surface}</Ico></ToolCell>
        <ToolCell><Ico>{ToolIcons.grid}</Ico></ToolCell>
        <ToolSep $ml={7} />
        <ToolCell $ml={8}><Ico>{ToolIcons.zoom}</Ico></ToolCell>
        <ToolCell><Ico>{ToolIcons.pan}</Ico></ToolCell>
        <ToolCell $ml={1}><Ico>{ToolIcons.rotate}</Ico></ToolCell>
        <ToolCell $ml={2}><Ico>{ToolIcons.layout}</Ico></ToolCell>
        <Caret $ml={3} />
        <ToolCell $ml={3}><Ico>{ToolIcons.shade}</Ico></ToolCell>
        <Caret $ml={3} />
        <ToolCell $ml={5}><Ico>{ToolIcons.cube}</Ico></ToolCell>
        <Caret $ml={3} />
        <ToolCell $ml={2}><Ico>{ToolIcons.view}</Ico></ToolCell>
        <Caret $ml={3} />
        <ToolSep $ml={11} />
      </Toolbar>

      <Viewport>
        <Canvas width="1376" height="803" viewBox="0 190 1376 803">
          <path d="M878 712L980 771L878 796" fill="none" stroke="#3d5cf5" strokeWidth="2" />
          <path d="M0 895L142 976L200 962" fill="none" stroke="#3d5cf5" strokeWidth="2" />
          <path d="M62 903l18-6 17 7v18l-16 11-18-8z" fill="#c6c9c9" fillOpacity=".7" stroke="#a5a8a8" />
          <path d="M62 903l18 7 17-6M80 910v23" fill="none" stroke="#a5a8a8" />
          <path d="M61 926l32-11" stroke="#b3cdb0" strokeWidth="4" />
          <path d="M61 926V894" stroke="#0a3cd0" strokeWidth="2.4" />
          <path d="M61 887l-3 9h6z" fill="#0a3cd0" />
          <path d="M61 927l22 10" stroke="#c8282c" strokeWidth="3.4" />
          <path d="M90 941l-10-1 2-5z" fill="#c8282c" />
          <circle cx="60" cy="927" r="3.6" fill="#d6d6d6" stroke="#888" />
          <text x="61" y="888" fontSize="11" fontFamily="Liberation Sans" textAnchor="middle" fill="#2f52e0">Z</text>
          <text x="99" y="920" fontSize="11" fontFamily="Liberation Sans" textAnchor="middle" fill="#2c9a3a">Y</text>
          <text x="92" y="946" fontSize="11" fontFamily="Liberation Sans" textAnchor="middle" fill="#d83a3a">X</text>
        </Canvas>
      </Viewport>
      <StatusBar />

      <FileMenu>
        <Row icon={<NewDoc />} label={<>新建(<u>N</u>)...</>} shortcut="Ctrl+N" />
        <Row icon={<FolderOpen />} label={<>打开(<u>O</u>)...</>} shortcut="Ctrl+O" />
        <Row label={<>关闭(<u>C</u>)</>} arrow />
        <MenuSep />
        <Row icon={<Floppy />} label={<>保存(<u>S</u>)</>} arrow />
        <MenuSep />
        <Row icon={<Prefs />} label={<>首选项(<u>P</u>)</>} arrow />
        <MenuSep />
        <Row icon={<Printer />} label={<>打印(<u>P</u>)...</>} />
        <Row label={<>绘图(<u>L</u>)...</>} shortcut="Ctrl+P" />
        <Row active icon={<ImportDoc />} label={<>导入(<u>M</u>)</>} arrow />
        <Row icon={<ExportDoc />} label={<>导出(<u>E</u>)</>} arrow />
        <MenuSep />
        <Row icon={<Toolbox />} label={<>实用工具(<u>U</u>)</>} arrow />
        <Row label={<>执行(<u>T</u>)</>} arrow />
        <Row label={<>属性(<u>I</u>)</>} />
        <MenuSep />
        <Row icon={<Help />} label={<>帮助(<u>H</u>)</>} arrow />
        <MenuSep />
        <Row icon={<Exit />} label={<>退出(<u>X</u>)</>} />
        <MenuFoot />
      </FileMenu>

      <SubMenu>
        <SubList>
          {SUB_ITEMS.map((item, i) =>
            item === "sep" ? (
              <SubSep key={i} />
            ) : (
              <SubItem key={i}>
                <SubIcon>{item.icon}</SubIcon>
                <SubText>
                  <SubTitle $track={item.track}>{item.title}</SubTitle>
                  <SubDesc>{item.desc}</SubDesc>
                </SubText>
              </SubItem>
            )
          )}
        </SubList>
        <ScrollFoot>
          <Caret />
        </ScrollFoot>
      </SubMenu>
    </Page>
  );
}
